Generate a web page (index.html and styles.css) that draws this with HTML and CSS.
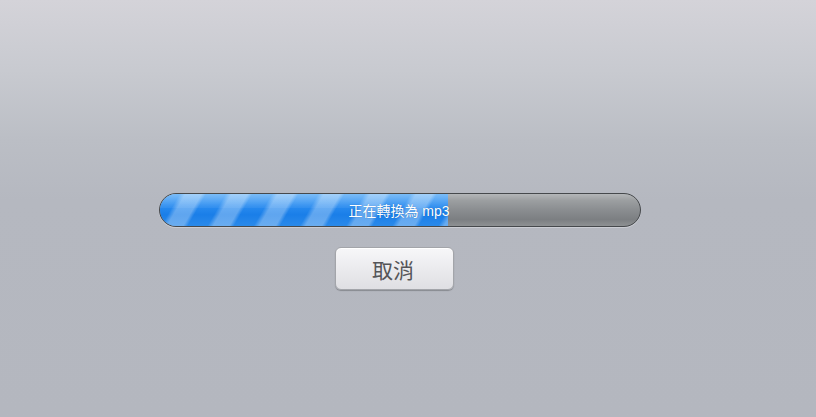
FILE: index.html
```html
<!DOCTYPE html>
<html>
<head>
<meta charset="utf-8">
<link rel="stylesheet" href="styles.css">
</head>
<body>
<div class="page">
  <div class="progress">
    <div class="fill" style="width:60%"></div>
    <div class="label">正在轉換為 mp3</div>
  </div>
  <button class="cancel">取消</button>
</div>
</body>
</html>
```
FILE: styles.css
```css
html, body { margin: 0; padding: 0; }
body {
  width: 816px;
  height: 417px;
  overflow: hidden;
  background: linear-gradient(to bottom, #d4d3d9 0px, #c8cad0 70px, #bbbec5 140px, #b5b8c0 200px, #b4b7bf 417px);
  font-family: "Liberation Sans", "Noto Sans CJK TC", sans-serif;
}
.page {
  display: flex;
  flex-direction: column;
  align-items: center;
  padding-top: 193px;
}
.progress {
  position: relative;
  box-sizing: border-box;
  width: 482px;
  height: 34px;
  margin-left: -16px;
  border: 1px solid #46494c;
  border-radius: 17px;
  overflow: hidden;
  background: linear-gradient(to bottom, #b4b6b8 0%, #9c9fa1 20%, #8a8d90 50%, #7c7f82 80%, #8e9193 100%);
  box-shadow: 0 1px 0 rgba(255,255,255,0.3);
}
.fill {
  position: absolute;
  left: 0; top: 0; bottom: 0;
  background:
    repeating-linear-gradient(120deg, rgba(255,255,255,0) 0px, rgba(255,255,255,0) 17px, rgba(255,255,255,0.3) 22px, rgba(255,255,255,0.3) 36px, rgba(255,255,255,0) 40px),
    linear-gradient(to bottom, #4ea6f6 0%, #2a8cf0 35%, #1a7ee8 65%, #2a8aea 100%);
}
.fill::after {
  content: "";
  position: absolute;
  left: 0; right: 0; top: 0; height: 45%;
  background: linear-gradient(to bottom, rgba(255,255,255,0.25), rgba(255,255,255,0.05));
}
.label {
  position: absolute;
  left: 0; right: 0; top: 0; bottom: 0;
  display: flex;
  align-items: center;
  justify-content: center;
  color: #ffffff;
  font-size: 14px;
  padding-right: 2px;
  text-shadow: 0 0 1px rgba(0,40,90,0.4);
}
.cancel {
  margin-top: 20px;
  margin-left: -27px;
  width: 119px;
  height: 43px;
  border: 1px solid #a3a5aa;
  border-radius: 6px;
  background: linear-gradient(to bottom, #f7f7f9 0%, #ebebee 50%, #dfdfe3 100%);
  box-shadow: 0 1px 1px rgba(0,0,0,0.25), inset 0 1px 0 #ffffff;
  color: #555558;
  font-size: 21px;
  font-family: "Noto Sans CJK TC", sans-serif;
  padding: 0 3px 0 0;
}
```
